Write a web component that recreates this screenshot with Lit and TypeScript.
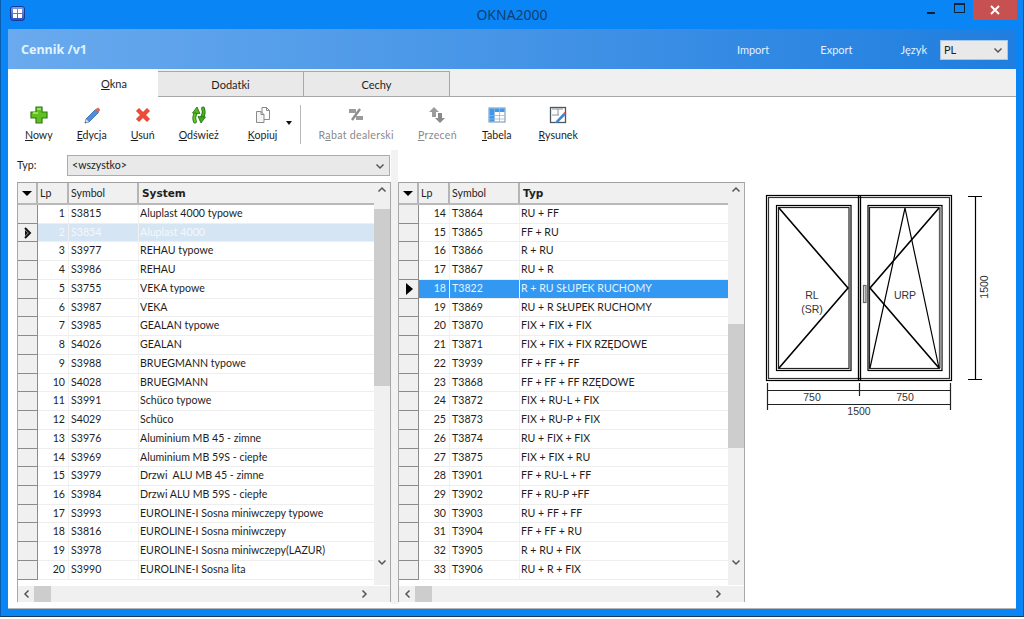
import { LitElement, html, css, svg } from "lit";
import { customElement } from "lit/decorators.js";

const leftRows: [number, string, string][] = [
  [1, "S3815", "Aluplast 4000 typowe"], [2, "S3854", "Aluplast 4000"], [3, "S3977", "REHAU typowe"], [4, "S3986", "REHAU"],
  [5, "S3755", "VEKA typowe"], [6, "S3987", "VEKA"], [7, "S3985", "GEALAN typowe"], [8, "S4026", "GEALAN"],
  [9, "S3988", "BRUEGMANN typowe"], [10, "S4028", "BRUEGMANN"], [11, "S3991", "Schüco typowe"], [12, "S4029", "Schüco"],
  [13, "S3976", "Aluminium MB 45 - zimne"], [14, "S3969", "Aluminium MB 59S - ciepłe"], [15, "S3979", "Drzwi  ALU MB 45 - zimne"],
  [16, "S3984", "Drzwi ALU MB 59S - ciepłe"], [17, "S3993", "EUROLINE-I Sosna miniwczepy typowe"], [18, "S3816", "EUROLINE-I Sosna miniwczepy"],
  [19, "S3978", "EUROLINE-I Sosna miniwczepy(LAZUR)"], [20, "S3990", "EUROLINE-I Sosna lita"],
];
const rightRows: [number, string, string][] = [
  [14, "T3864", "RU + FF"], [15, "T3865", "FF + RU"], [16, "T3866", "R + RU"], [17, "T3867", "RU + R"],
  [18, "T3822", "R + RU SŁUPEK RUCHOMY"], [19, "T3869", "RU + R SŁUPEK RUCHOMY"], [20, "T3870", "FIX + FIX + FIX"],
  [21, "T3871", "FIX + FIX + FIX RZĘDOWE"], [22, "T3939", "FF + FF + FF"], [23, "T3868", "FF + FF + FF RZĘDOWE"],
  [24, "T3872", "FIX + RU-L + FIX"], [25, "T3873", "FIX + RU-P + FIX"], [26, "T3874", "RU + FIX + FIX"], [27, "T3875", "FIX + FIX + RU"],
  [28, "T3901", "FF + RU-L + FF"], [29, "T3902", "FF + RU-P +FF"], [30, "T3903", "RU + FF + FF"], [31, "T3904", "FF + FF + RU"],
  [32, "T3905", "R + RU + FIX"], [33, "T3906", "RU + R + FIX"],
];

const icons = {
  plus: svg`<path d="M6 1h6v5h5v6h-5v5H6v-5H1V6h5z" fill="#5fc01e" stroke="#2f7a10" stroke-width="1.2"/><path d="M7 3h4M3 7h5" stroke="#b6ec7c" stroke-width="1.4"/>`,
  pen: svg`<path d="M3 13 12.500 3.500l3 3L6 16l-4 1z" fill="#4a90e0" stroke="#3466a8" stroke-width=".8"/><path d="m12.500 3.500 1.500-1.500c.6-.5 1.200-.5 1.700 0l1 1c.5.5.5 1.200 0 1.700L15.500 6.500z" fill="#e06a5a"/><path d="M3 13l3 3-4 1z" fill="#f0dcb0"/><path d="M2 17l1.500-.4-1-1z" fill="#222"/>`,
  x: svg`<path d="M2 5l3-3 4 4 4-4 3 3-4 4 4 4-3 3-4-4-4 4-3-3 4-4z" fill="#ee4a3a" stroke="#d9a090" stroke-width=".8"/>`,
  refresh: svg`<g fill="none" stroke-linecap="round"><path d="M5 15.500C3.500 12 4.500 9 6 6.500" stroke="#1e7010" stroke-width="3.800"/><path d="M13 2.500c1.500 3.500.5 6.500-1 9" stroke="#1e7010" stroke-width="3.800"/><path d="M5 15.500C3.500 12 4.500 9 6 6.500" stroke="#62c824" stroke-width="2.200"/><path d="M13 2.500c1.500 3.500.5 6.500-1 9" stroke="#4ab41c" stroke-width="2.200"/></g><path d="M2.500 7 7 1l3 6.500z" fill="#52b81e" stroke="#1e7010" stroke-width=".8"/><path d="M15.500 11 11 17l-3-6.500z" fill="#3fa818" stroke="#1e7010" stroke-width=".8"/>`,
  copy: svg`<path d="M8 1.500h4.500l3 3v9H8z" fill="#fff" stroke="#8a8a8a"/><path d="M12.500 1.500v3h3" fill="none" stroke="#8a8a8a"/><path d="M2.500 5.500H7l3 3v8H2.500z" fill="#f4f4f4" stroke="#8a8a8a"/><path d="M7 5.500v3h3" fill="none" stroke="#8a8a8a"/>`,
  percent: svg`<rect x="2" y="3" width="7" height="4" fill="#9a9a9a"/><rect x="9" y="10" width="7" height="4" fill="#9a9a9a"/><path d="M5 14 13 3" stroke="#8c8c8c" stroke-width="2.400"/>`,
  updown: svg`<path d="M6 1l5 5H8v5H4V6H1z" fill="#9c9c9c"/><path d="M12 17l5-5h-3V7h-4v5H7z" fill="#8a8a8a"/>`,
  table: svg`<rect x="1" y="2" width="16" height="14" fill="#fff" stroke="#6a8fb8"/><rect x="1.500" y="2.500" width="15" height="3.500" fill="#3a9af0"/><rect x="1.500" y="6" width="5" height="9.500" fill="#3a9af0"/><path d="M1 9.500h16M1 13h16M6.500 2v14M11.500 2v14" stroke="#9ab6d0" stroke-width=".8"/>`,
  sketch: svg`<rect x="1.500" y="1.500" width="15" height="15" fill="#fff" stroke="#4c5660" stroke-width="1.300"/><path d="M3 9h7M9 3v6M3 3h11" stroke="#8a949e"/><path d="M7 15l7.500-8 2 2L9 16.500 6.500 17z" fill="#3c86d8"/><path d="M14.500 7l1-1 2 2-1 1z" fill="#e04040"/>`,
};

const tools = [
  { l: "N", r: "owy", i: icons.plus, c: "" }, { l: "E", r: "dycja", i: icons.pen, c: "" }, { l: "U", r: "suń", i: icons.x, c: "" },
  { l: "O", r: "dśwież", i: icons.refresh, c: "" }, { l: "K", r: "opiuj", i: icons.copy, menu: true, c: "menu" },
  { p: "R", l: "a", r: "bat dealerski", i: icons.percent, c: "off after" }, { l: "P", r: "rzeceń", i: icons.updown, c: "off prz" },
  { l: "T", r: "abela", i: icons.table, c: "tab1" }, { l: "R", r: "ysunek", i: icons.sketch, c: "rys" },
];

const chevUp = svg`<path d="M1.500 5.500 5 2l3.500 3.500" fill="none" stroke="#555" stroke-width="1.500"/>`;
const chevDown = svg`<path d="M1.500 2.500 5 6l3.500-3.500" fill="none" stroke="#555" stroke-width="1.500"/>`;
const chevLeft = svg`<path d="M5.500 1.500 2 5l3.500 3.500" fill="none" stroke="#555" stroke-width="1.500"/>`;
const chevRight = svg`<path d="M2.500 1.500 6 5 2.500 8.500" fill="none" stroke="#555" stroke-width="1.500"/>`;

@customElement("data-grid")
class DataGrid extends LitElement {
  static properties = { rows: { attribute: false }, title: {}, sel: { type: Number }, kind: {} };
  rows: [number, string, string][] = [];
  title = "";
  sel = 0;
  kind = "left";
  static styles = css`
    :host { display: block; height: 420px; box-sizing: border-box; border: 1px solid #a8a8a8; border-top-color: #a0a0a0; background: #fff; position: relative; }
    .main { display: grid; height: 402px; overflow: hidden; }
    .cols { display: flex; flex-direction: column; min-width: 0; }
    .head { display: flex; height: 20px; flex: none; border-bottom: 2px solid #b9b9b9; background: #f0f0f0; box-sizing: content-box; }
    .head div { border-right: 2px solid #b5b5b5; box-sizing: border-box; line-height: 21px; padding-left: 2px; }
    .head .c0 { width: 20px; }
    .head .c1 { width: 31px; }
    .head .c2 { width: 70px; }
    .head .last { border-right: 0; flex: 1; font: bold 10.500px/21px "DejaVu Sans", sans-serif; padding-left: 3px; background: #f0f0f0; }
    .arrow { display: flex; align-items: center; justify-content: center; padding: 0 !important; }
    .arrow i { border: 5px solid transparent; border-top: 5px solid #000; border-bottom: 0; }
    .row { display: flex; height: 18.74px; box-sizing: border-box; line-height: 16px; white-space: pre; border-bottom: 1px solid #eeeeee; }
    .ind { width: 20px; flex: none; background: #f0f0f0; border-right: 1px solid #8c8c8c; border-bottom: 1px solid #8c8c8c; margin-bottom: -1px; display: flex; align-items: center; justify-content: center; box-sizing: border-box; }
    .lp { width: 31px; flex: none; text-align: right; padding-right: 3px; box-sizing: border-box; border-right: 1px solid #f1f1f1; }
    .sym { width: 70px; flex: none; padding-left: 2px; box-sizing: border-box; border-right: 1px solid #f1f1f1; }
    .txt { flex: 1; padding-left: 1px; }
    .row.soft { background: #d6e5f3; color: #f4f8fb; }
    .row.hard { background: #3298f2; color: #e6f2fd; }
    .row.hard .ind, .row.soft .ind { color: #000; }
    .vbar { position: absolute; top: 0; right: 0; width: 16px; height: 402px; background: #f0f0f0; display: flex; flex-direction: column; align-items: center; justify-content: space-between; padding: 3px 0 19px; box-sizing: border-box; z-index: 2; }
    .vbar svg { position: relative; }
    .thumb { position: absolute; left: 0; width: 16px; background: #cdcdcd; }
    .left .thumb { top: 26px; height: 177px; }
    .right .thumb { top: 141px; height: 124px; }
    .hbar { height: 16px; background: #f0f0f0; display: flex; align-items: center; justify-content: space-between; padding: 0 22px 0 5px; position: relative; margin-top: 1px; }
    .hthumb { position: absolute; left: 16px; top: 0; width: 17px; height: 16px; background: #cdcdcd; }
    svg { display: block; }
  `;
  render() {
    return html`<div class="${this.kind}">
      <div class="cols main">
        <div class="head">
          <div class="arrow c0"><i></i></div>
          <div class="c1">Lp</div>
          <div class="c2">Symbol</div>
          <div class="last">${this.title}</div>
        </div>
        ${this.rows.map((r) => {
          const cls = r[0] === this.sel ? (this.kind === "left" ? "soft" : "hard") : "";
          return html`<div class="row ${cls}">
            <div class="ind">${r[0] === this.sel
              ? this.kind === "left"
                ? html`<svg width="8" height="12" viewBox="0 0 8 12"><path d="M1 1l5 5-5 5" fill="none" stroke="#111" stroke-width="2"/><path d="M1 3l3 3-3 3" fill="#111"/></svg>`
                : html`<svg width="8" height="12" viewBox="0 0 8 12"><path d="M1 0l7 6-7 6z" fill="#000"/></svg>`
              : ""}</div>
            <div class="lp">${r[0]}</div>
            <div class="sym">${r[1]}</div>
            <div class="txt">${r[2]}</div>
          </div>`;
        })}
      </div>
      <div class="vbar">
        <div class="thumb"></div>
        <svg width="10" height="8" viewBox="0 0 10 8">${chevUp}</svg>
        <svg width="10" height="8" viewBox="0 0 10 8">${chevDown}</svg>
      </div>
      <div class="hbar">
        <div class="hthumb"></div>
        <svg width="8" height="10" viewBox="0 0 8 10">${chevLeft}</svg>
        <svg width="8" height="10" viewBox="0 0 8 10">${chevRight}</svg>
      </div>
    </div>`;
  }
}

@customElement("app-root")
class AppRoot extends LitElement {
  static styles = css`
    :host { display: block; width: 1024px; height: 619px; overflow: hidden; font: 10.600px/1.2 Lato, "Liberation Sans", sans-serif; color: #1e1e1e; background: #fff; }
    .win { height: 617px; box-sizing: border-box; background: #0985f5; border: 1px solid #0a5cae; border-top: 0; border-bottom-color: #1a3a5a; padding: 0 7px 7px; display: flex; flex-direction: column; }
    .title { height: 29px; flex: none; display: flex; align-items: flex-start; position: relative; }
    .appicon { margin: 6px 0 0 2px; width: 15px; height: 15px; border-radius: 3px; background: linear-gradient(#7d9cf0, #2a50c8); border: 1px solid #1c3a90; box-sizing: border-box; display: grid; grid-template-columns: 4px 4px; grid-auto-rows: 4px; gap: 1px; align-content: center; justify-content: center; }
    .appicon i { background: #fff; }
    .caption { position: absolute; left: 0; right: 0; top: 5px; text-align: center; font: 14px "Noto Sans", sans-serif; color: #0f3f73; }
    .ctrl { margin-left: auto; display: flex; margin-right: -1px; align-items: flex-start; }
    .ctrl div { height: 20px; display: flex; align-items: center; justify-content: center; }
    .min { width: 28px; } .min i { width: 8px; height: 2px; background: #123; margin-top: 5px; }
    .max { width: 28px; } .max i { width: 9px; height: 7px; border: 1px solid #123; border-top-width: 2px; margin-top: -4px; }
    .close { width: 44px; background: #c75050; color: #fff; }
    .head { height: 40px; flex: none; display: flex; align-items: center; background: linear-gradient(90deg, #6aaaee, #1f7edf); color: #e4f1fe; font-size: 11px; }
    .head b { margin-left: 13px; font: bold 12.500px "Noto Sans", sans-serif; color: #e2f4ff; flex: 1; }
    .head span { margin-top: 2px; }
    .head .imp { margin-right: 51px; }
    .head .exp { margin-right: 48px; }
    .head .jez { margin-right: 13px; }
    .combo { box-sizing: border-box; display: flex; align-items: center; justify-content: space-between; background: #e9e9e9; border: 1px solid #acacac; color: #222; }
    .lang { width: 68px; height: 20px; margin: 2px 8px 0 0; padding: 0 4px 0 3px; border-color: #a9c8e8; }
    .lang span { margin-top: 0; }
    .page { flex: 1; background: #fff; display: flex; flex-direction: column; min-height: 0; border-bottom: 1px solid #b4b4b4; }
    .tabs { height: 27px; flex: none; background: #f0f0f0; display: flex; align-items: flex-end; border-bottom: 1px solid #a8a8a8; }
    .tab { width: 146px; height: 25px; box-sizing: border-box; background: #e9e9e9; border: 1px solid #a8a8a8; border-bottom: 0; border-left-width: 0; text-align: center; line-height: 26px; font-size: 11px; }
    .tab.on { width: 150px; height: 28px; margin-bottom: -1px; background: #fff; border: 0; line-height: 29px; position: relative; padding-left: 62px; }
    u { text-decoration-thickness: 1px; text-underline-offset: 1px; }
    .bar { height: 53px; flex: none; display: flex; padding-left: 17px; gap: 24px; align-items: flex-start; }
    .tool { display: flex; flex-direction: column; align-items: center; padding-top: 9px; white-space: nowrap; }
    .tool svg { display: block; }
    .tool span { margin-top: 4px; line-height: 14px; }
    .tool.off span { color: #8a8a8a; }
    .tool.off span { letter-spacing: .03em; }
    .tool.menu { margin-left: 5px; margin-right: -11px; }
    .caret { width: 0; border: 3px solid transparent; border-top: 4px solid #111; border-bottom: 0; margin-top: 24px; margin-left: -4px; margin-right: 3px; }
    .sep { width: 1px; height: 39px; background: #b8b8b8; margin: 8px 17px 0 -19px; }
    .tool.after { margin-left: -24px; }
    .tool.tab1 { margin-left: 1px; }
    .tool.rys { margin-left: 3px; }
    .body { flex: 1; display: flex; min-height: 0; }
    .lcol { width: 383px; flex: none; padding-left: 9px; box-sizing: border-box; }
    .typ { display: flex; height: 32px; align-items: flex-start; padding: 5px 1px 0 0; box-sizing: border-box; }
    .typ label { margin: 4px 26px 0 0; width: 24px; }
    .typ .combo { flex: 1; height: 21px; padding: 0 4px 0 4px; }
    .split { width: 7px; flex: none; background: #f2f2f2; margin-bottom: 4px; }
    .rcol { width: 347px; flex: none; padding-top: 32px; }
    .draw { flex: 1; padding: 30px 0 0 5px; }
    .draw text { font: 10.500px "Liberation Sans", sans-serif; fill: #333; text-anchor: middle; }
    svg { display: block; }
  `;
  render() {
    return html`<div class="win">
      <div class="title">
        <div class="appicon"><i></i><i></i><i></i><i></i></div>
        <div class="caption">OKNA2000</div>
        <div class="ctrl">
          <div class="min"><i></i></div>
          <div class="max"><i></i></div>
          <div class="close"><svg width="10" height="10" viewBox="0 0 10 10"><path d="M1 1l8 8M9 1l-8 8" stroke="#fff" stroke-width="2"/></svg></div>
        </div>
      </div>
      <div class="head">
        <b>Cennik /v1</b>
        <span class="imp">Import</span><span class="exp">Export</span><span class="jez">Język</span>
        <div class="combo lang"><span>PL</span><svg width="10" height="8" viewBox="0 0 10 8">${chevDown}</svg></div>
      </div>
      <div class="page">
        <div class="tabs">
          <div class="tab on"><u>O</u>kna</div>
          <div class="tab">Dodatki</div>
          <div class="tab">Cechy</div>
        </div>
        <div class="bar">
          ${tools.map((t, i) => html`
            ${i === 5 ? html`<div class="sep"></div>` : ""}
            <div class="tool ${t.c}">
              <svg width="18" height="18" viewBox="0 0 18 18">${t.i}</svg>
              <span>${t.p ?? ""}<u>${t.l}</u>${t.r}</span>
            </div>
            ${t.menu ? html`<div class="caret"></div>` : ""}
          `)}
        </div>
        <div class="body">
          <div class="lcol">
            <div class="typ"><label>Typ:</label><div class="combo"><span>&lt;wszystko&gt;</span><svg width="10" height="8" viewBox="0 0 10 8">${chevDown}</svg></div></div>
            <data-grid .rows=${leftRows} title="System" sel="2" kind="left"></data-grid>
          </div>
          <div class="split"></div>
          <div class="rcol"><data-grid .rows=${rightRows} title="Typ" sel="18" kind="right"></data-grid></div>
          <div class="draw">
            <svg width="250" height="240" viewBox="0 0 250 240">
              <g fill="none" stroke="#000" stroke-width="1.200">
                <rect x="16.500" y="15.500" width="185" height="185"/>
                <rect x="18.500" y="17.500" width="181" height="181" stroke="#333"/>
                <path d="M108.500 15v185M110.500 15v185" stroke-width="1.300"/>
                <rect x="26.500" y="25.500" width="74.500" height="165"/>
                <rect x="28.500" y="27.500" width="70.500" height="161" stroke="#222"/>
                <rect x="118" y="25.500" width="74" height="165"/>
                <rect x="119.500" y="27.500" width="70" height="161" stroke="#222"/>
                <path d="M190.500 27v161" stroke="#999" stroke-width="2"/>
                <path d="M29 28l69 80-69 80" stroke-width="1.600"/>
                <path d="M189 28l-69 80 69 80" stroke-width="1.600"/>
                <path d="M120 188 155 28l34 160" stroke-width="1.200"/>
                <rect x="113.500" y="105.500" width="2.500" height="17" fill="#ddd" stroke="#666"/>
                <path d="M218 16.500h14M225.500 16.500v183M218 199.500h14"/>
                <path d="M17.500 203v27M109.500 203v13M200.500 203v27M17.500 210.500h183M17.500 224.500h183" stroke="#222"/>
              </g>
              <text x="62" y="119">RL</text>
              <text x="62" y="133">(SR)</text>
              <text x="155" y="119">URP</text>
              <text x="62" y="221">750</text>
              <text x="155" y="221">750</text>
              <text x="109" y="235">1500</text>
              <text transform="translate(238 107) rotate(-90)">1500</text>
            </svg>
          </div>
        </div>
      </div>
    </div>`;
  }
}
